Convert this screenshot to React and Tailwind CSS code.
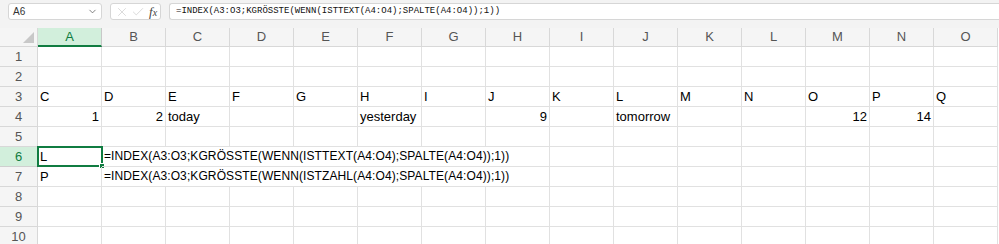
import React from "react";
import { X, Check, ChevronDown } from "lucide-react";

const cols = ["A", "B", "C", "D", "E", "F", "G", "H", "I", "J", "K", "L", "M", "N", "O"];

const rows = {
  3: { A: "C", B: "D", C: "E", D: "F", E: "G", F: "H", G: "I", H: "J", I: "K", J: "L", K: "M", L: "N", M: "O", N: "P", O: "Q" },
  4: { A: 1, B: 2, C: "today", F: "yesterday", H: 9, J: "tomorrow", M: 12, N: 14 },
  6: { A: "L", B: "=INDEX(A3:O3;KGRÖSSTE(WENN(ISTTEXT(A4:O4);SPALTE(A4:O4));1))" },
  7: { A: "P", B: "=INDEX(A3:O3;KGRÖSSTE(WENN(ISTZAHL(A4:O4);SPALTE(A4:O4));1))" },
};

function Cell({ value, span = 1, selected }) {
  const isNum = typeof value === "number";
  const isFormula = typeof value === "string" && value.startsWith("=");
  return (
    <div
      className={
        "relative h-full shrink-0 border-r border-b border-[#e1e1e1] px-[2px] flex items-end pb-[1px] leading-[17px] text-black whitespace-nowrap " +
        (isFormula ? "text-[12px] tracking-[0.1px] " : "text-[13px] ") +
        (isNum ? "justify-end" : "justify-start")
      }
      style={{ width: 64 * span }}
    >
      {value}
      {selected && (
        <div className="absolute -left-[1px] -top-[1px] w-[66px] h-[21px] border-2 border-[#107c41]">
          <div className="absolute -right-[4px] -bottom-[4px] w-[6px] h-[6px] bg-[#107c41] border border-white" />
        </div>
      )}
    </div>
  );
}

function Row({ n }) {
  const data = rows[n] || {};
  const active = n === 6;
  const cells = [];
  for (let i = 0; i < cols.length; i++) {
    const c = cols[i];
    const v = data[c];
    if (typeof v === "string" && v.startsWith("=")) {
      cells.push(<Cell key={c} value={v} span={7} />);
      i += 6;
    } else {
      cells.push(<Cell key={c} value={v} selected={active && c === "A"} />);
    }
  }
  return (
    <div className="flex h-[20px]">
      <div
        className={
          "w-[38px] shrink-0 border-r border-b flex items-center justify-center text-[13px] " +
          (active
            ? "bg-[#d2efdc] text-[#107c41] border-r-[#107c41] border-b-[#cfcfcf]"
            : "bg-[#f5f5f5] text-[#555] border-[#d8d8d8]")
        }
      >
        {n}
      </div>
      {cells}
    </div>
  );
}

export default function App() {
  return (
    <div className="w-[999px] h-[244px] overflow-hidden bg-white font-['Liberation_Sans',Arial,sans-serif]">
      <div className="h-[28px] bg-[#f3f3f3] flex items-start pt-[3px] pl-[8px] gap-[8px]">
        <div className="w-[94px] h-[17px] bg-white border border-[#d6d6d6] rounded-[3px] flex items-center justify-between pl-[4px] pr-[3px]">
          <span className="text-[10px] text-[#333]">A6</span>
          <ChevronDown size={11} strokeWidth={1.6} color="#555" />
        </div>
        <div className="w-[51px] h-[17px] bg-white border border-[#d6d6d6] rounded-[3px] flex items-center pl-[4px] gap-[2px]">
          <X size={14} strokeWidth={1.1} color="#c6c6c6" />
          <Check size={14} strokeWidth={1.1} color="#c6c6c6" />
          <span className="ml-[2px] text-[13px] italic text-[#444] font-['Liberation_Serif',serif] leading-none">
            f<span className="text-[10px]">x</span>
          </span>
        </div>
        <div className="flex-1 h-[17px] bg-white border border-[#d6d6d6] border-r-0 rounded-l-[3px] flex items-center pl-[6px]">
          <span className="text-[9px] text-[#111] font-['Liberation_Mono',monospace] whitespace-nowrap">
            =INDEX(A3:O3;KGRÖSSTE(WENN(ISTTEXT(A4:O4);SPALTE(A4:O4));1))
          </span>
        </div>
      </div>
      <div className="flex h-[19px]">
        <div className="w-[38px] shrink-0 bg-[#f5f5f5] border-r border-b border-[#d8d8d8] relative">
          <div className="absolute right-[3px] bottom-[3px] w-0 h-0 border-l-[11px] border-l-transparent border-b-[11px] border-b-[#c8c8c8]" />
        </div>
        {cols.map((c) => (
          <div
            key={c}
            className={
              "w-[64px] shrink-0 flex items-center justify-center text-[13px] border-r " +
              (c === "A"
                ? "bg-[#d2efdc] text-[#107c41] border-[#c8c8c8] border-b-2 border-b-[#107c41]"
                : "bg-[#f5f5f5] text-[#555] border-[#d8d8d8] border-b")
            }
          >
            {c}
          </div>
        ))}
      </div>
      {[1, 2, 3, 4, 5, 6, 7, 8, 9, 10].map((n) => (
        <Row key={n} n={n} />
      ))}
    </div>
  );
}
